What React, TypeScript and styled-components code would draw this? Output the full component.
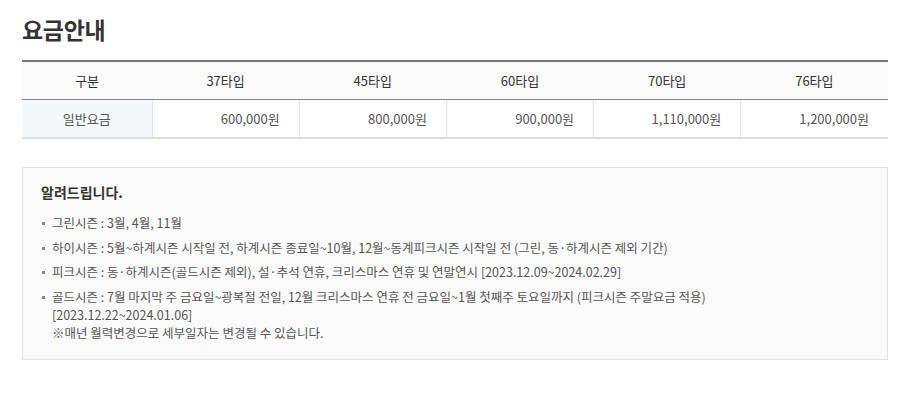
import styled, { createGlobalStyle } from "styled-components";

const GlobalStyle = createGlobalStyle`
  body {
    margin: 0;
    background: #fff;
    font-family: "Noto Sans CJK KR", "Noto Sans", sans-serif;
    color: #333;
  }
`;

const Page = styled.div`
  padding: 12px 23px 0 22px;
  width: 866px;
`;

const Title = styled.h2`
  margin: 0 0 14px;
  font-size: 23px;
  font-weight: 700;
  line-height: 34px;
  color: #333;
  letter-spacing: -0.3px;
`;

const Table = styled.table`
  width: 100%;
  border-collapse: collapse;
  table-layout: fixed;
  border-top: 2px solid #777;
  border-bottom: 2px solid #ddd;
  font-size: 13px;
`;

const Th = styled.th`
  height: 37px;
  padding: 0;
  background: #fafafa;
  border-bottom: 1px solid #888;
  font-weight: 400;
  color: #333;
  text-align: center;
`;

const Td = styled.td<{ $label?: boolean }>`
  height: 37px;
  padding: 0 ${(p) => (p.$label ? "0" : "19px")} 0 0;
  background: ${(p) => (p.$label ? "#f3f8f8" : "#fff")};
  border-left: ${(p) => (p.$label ? "none" : "1px solid #e2e2e2")};
  color: #555;
  text-align: ${(p) => (p.$label ? "center" : "right")};
`;

const Notice = styled.div`
  margin-top: 28px;
  padding: 13px 18px 17px;
  background: #fafafa;
  border: 1px solid #e3e3e3;
`;

const NoticeTitle = styled.h3`
  margin: 0 0 11px;
  font-size: 14px;
  font-weight: 700;
  line-height: 22px;
  color: #333;
`;

const List = styled.ul`
  margin: 0;
  padding: 0;
  list-style: none;
`;

const Item = styled.li`
  position: relative;
  padding-left: 11px;
  margin-bottom: 6.5px;
  font-size: 12.5px;
  line-height: 18px;
  color: #555;

  &::before {
    content: "";
    position: absolute;
    left: 1px;
    top: 8px;
    width: 3px;
    height: 3px;
    background: #888;
  }

  &:last-child {
    margin-bottom: 0;
  }
`;

const types = ["37타입", "45타입", "60타입", "70타입", "76타입"];
const prices = ["600,000원", "800,000원", "900,000원", "1,110,000원", "1,200,000원"];

export default function App() {
  return (
    <Page>
      <GlobalStyle />
      <Title>요금안내</Title>
      <Table>
        <colgroup>
          <col style={{ width: 130 }} />
          <col />
          <col />
          <col />
          <col />
          <col />
        </colgroup>
        <thead>
          <tr>
            <Th>구분</Th>
            {types.map((t) => (
              <Th key={t}>{t}</Th>
            ))}
          </tr>
        </thead>
        <tbody>
          <tr>
            <Td $label>일반요금</Td>
            {prices.map((p) => (
              <Td key={p}>{p}</Td>
            ))}
          </tr>
        </tbody>
      </Table>
      <Notice>
        <NoticeTitle>알려드립니다.</NoticeTitle>
        <List>
          <Item>그린시즌 : 3월, 4월, 11월</Item>
          <Item>하이시즌 : 5월~하계시즌 시작일 전, 하계시즌 종료일~10월, 12월~동계피크시즌 시작일 전 (그린, 동·하계시즌 제외 기간)</Item>
          <Item>피크시즌 : 동·하계시즌(골드시즌 제외), 설·추석 연휴, 크리스마스 연휴 및 연말연시 [2023.12.09~2024.02.29]</Item>
          <Item>
            골드시즌 : 7월 마지막 주 금요일~광복절 전일, 12월 크리스마스 연휴 전 금요일~1월 첫째주 토요일까지 (피크시즌 주말요금 적용)
            <br />
            [2023.12.22~2024.01.06]
            <br />
            ※매년 월력변경으로 세부일자는 변경될 수 있습니다.
          </Item>
        </List>
      </Notice>
    </Page>
  );
}
